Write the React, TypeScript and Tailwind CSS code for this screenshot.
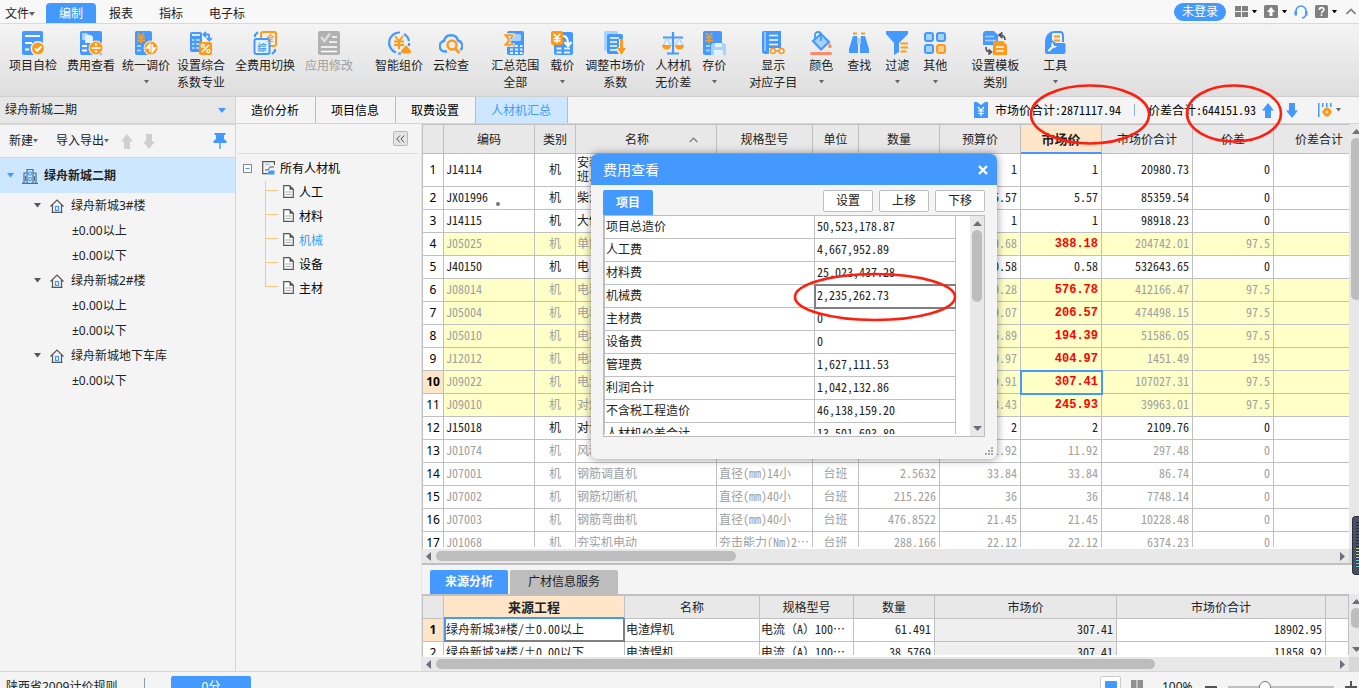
import React, { useState } from "react"

const BLUE = "#4499ff"
const ORANGE = "#ff9a18"
const LIGHT = "#a6d2ff"

const songFont = "font-['Noto_Sans_Mono_CJK_SC','Noto_Sans_CJK_SC',monospace]"

/* ---------- ribbon icons ---------- */

const icons: Record<string, React.ReactNode> = {
    check: (
        <>
            <rect x="1" width="21" height="24" rx="2" fill={BLUE} />
            <path d="M4 5h15M4 12h7M4 18.500h4" stroke="#fff" strokeWidth="2" />
            <circle cx="17" cy="17.500" r="7.500" fill="#f0f0f0" />
            <circle cx="17" cy="17.500" r="6" fill={ORANGE} />
            <path d="M14 17.500l2.300 2.300 4-4.300" stroke="#fff" strokeWidth="2" fill="none" />
        </>
    ),
    fee: (
        <>
            <rect x="1" width="22" height="24" rx="2" fill={BLUE} />
            <path d="M3 2h5l2 2v5H3z" fill={LIGHT} />
            <path d="M6 4h6l2 2v6H6z" fill="#e4f2ff" />
            <path d="M3 15h5M3 19.500h5" stroke="#fff" strokeWidth="2" />
            <circle cx="17" cy="17" r="7.500" fill="#f0f0f0" />
            <circle cx="17" cy="17" r="6.500" fill={ORANGE} />
            <path d="M12.500 17h9" stroke="#fff" strokeWidth="1.800" />
            <circle cx="17" cy="13.500" r="1.200" fill="#fff" />
            <circle cx="17" cy="20.500" r="1.200" fill="#fff" />
        </>
    ),
    adjust: (
        <>
            <rect x="1" width="17" height="24" rx="2" fill={BLUE} />
            <path d="M4 2l3 4 3-4M3 6.500h8M3 9.500h8M7 6v6" stroke={ORANGE} strokeWidth="1.800" fill="none" />
            <path d="M3 15h4M3 19.500h4" stroke={LIGHT} strokeWidth="2" />
            <circle cx="17" cy="17" r="7.500" fill="#f0f0f0" />
            <circle cx="17" cy="17" r="6.500" fill={ORANGE} />
            <path d="M15.800 21v-8l-3.300 4h3.300M18.200 13v8l3.300-4h-3.300" stroke="#fff" strokeWidth="1.500" fill="#fff" />
        </>
    ),
    percent: (
        <>
            <rect x="1" y="1" width="12" height="20" rx="2" fill={BLUE} />
            <path d="M3 4h8" stroke="#fff" strokeWidth="1.600" />
            <path d="M3 9h2.500M7 9h4M3 13h2.500M7 13h4M3 17h2.500M7 17h3" stroke={LIGHT} strokeWidth="2" />
            <path d="M17 1l-2.500 2.500L17 6M15 3.500h5M20 3v6M17.800 7l2.400 2.500L22.800 7" stroke={BLUE} strokeWidth="1.800" fill="none" />
            <rect x="10" y="11" width="13" height="13" rx="2" fill={ORANGE} />
            <path d="M13 21l7-7" stroke="#fff" strokeWidth="1.600" />
            <circle cx="13.800" cy="15" r="1.500" fill="none" stroke="#fff" strokeWidth="1.300" />
            <circle cx="19.300" cy="20.200" r="1.500" fill="none" stroke="#fff" strokeWidth="1.300" />
        </>
    ),
    swap: (
        <>
            <path d="M2 6V4l3-3M22 18v2l-3 3" stroke={BLUE} strokeWidth="2" fill="none" />
            <rect x="8" y="1" width="15" height="14" rx="2" fill="#f0f0f0" stroke={ORANGE} strokeWidth="2" />
            <rect x="1.500" y="8" width="15" height="15" rx="2" fill="#e4f2ff" stroke={BLUE} strokeWidth="2" />
            <text x="17.500" y="9.500" fontSize="8" fontWeight="700" textAnchor="middle" fill={ORANGE}>全</text>
            <text x="9" y="19.500" fontSize="9" fontWeight="700" textAnchor="middle" fill={BLUE}>综</text>
        </>
    ),
    apply: (
        <>
            <rect x="1" width="22" height="24" rx="2" fill="#b1b1b1" />
            <path d="M4 6l3.500 4L13 2.500" stroke="#dcdcdc" strokeWidth="2.500" fill="none" />
            <path d="M15 6h5M12 11h8M4 16h16M4 20.500h16" stroke="#fff" strokeWidth="1.600" />
        </>
    ),
    smart: (
        <>
            <path d="M9 21.500A10.300 10.300 0 0 1 13 1.500M17 3a10.300 10.300 0 0 1 5 7M22 12v3M11 22.500h3" stroke={BLUE} strokeWidth="2.200" fill="none" />
            <path d="M8 5l4 5 4-5M7 10.500h10M7 14h10M12 10v8" stroke={ORANGE} strokeWidth="2" fill="none" />
            <path d="M19 14c2 3 5 5 5 6.500 0 1.500-1 2-2 2h-6c-1 0-2-.5-2-2 0-1.500 3-3.500 5-6.500z" fill={ORANGE} />
        </>
    ),
    cloud: (
        <>
            <path d="M8 20.500H6A5.300 5.300 0 0 1 5 10a7.200 7.200 0 0 1 14-.5 5.500 5.500 0 0 1 2.500 9.500" stroke={BLUE} strokeWidth="2.400" fill="none" />
            <circle cx="13" cy="14" r="4.500" stroke={ORANGE} strokeWidth="2.400" fill="none" />
            <path d="M16 17.500l4.500 4.500" stroke={ORANGE} strokeWidth="2.600" />
        </>
    ),
    sum: (
        <>
            <rect x="4" width="17" height="24" rx="2" fill={BLUE} />
            <rect x="9" y="3" width="9" height="7" rx="1" fill={LIGHT} />
            <path d="M7 15h3M12 15h3M17 15h2.500M7 18.500h3M12 18.500h3M17 18.500h2.500M7 22h3M12 22h3M17 22h2.500" stroke="#e4f2ff" strokeWidth="1.800" />
            <path d="M9.500 6V4.200H2.500L6.500 9l-4 4.800h7V12" stroke="#f0f0f0" strokeWidth="4" fill="none" />
            <path d="M9.500 6V4.200H2.500L6.500 9l-4 4.800h7V12" stroke={ORANGE} strokeWidth="2" fill="none" />
        </>
    ),
    load: (
        <>
            <rect x="4" y="1" width="19" height="23" rx="2" fill={BLUE} />
            <path d="M13 5c4 0 5 3 5 8M14.500 11l3.500 4 3.500-4" stroke="#fff" strokeWidth="2.200" fill="none" />
            <path d="M6.500 17.500h5M14 17.500h6M6.500 21.500h5M14 21.500h6" stroke="#e4f2ff" strokeWidth="1.800" />
            <rect x="1" width="12" height="14" rx="2" fill={ORANGE} />
            <path d="M4 3l3 3.500L10 3M3.500 7.500h7M3.500 10h7M7 7v5" stroke="#fff" strokeWidth="1.500" fill="none" />
        </>
    ),
    market: (
        <>
            <rect x="1" width="14" height="20" rx="2" fill={LIGHT} />
            <rect x="4" y="3" width="16" height="20" rx="2" fill={BLUE} />
            <path d="M7 7h9M7 11h7M7 15h7M7 19h6" stroke="#fff" strokeWidth="1.600" />
            <path d="M18.500 8v11M14.500 17l4 5 4-5" stroke="#f0f0f0" strokeWidth="5" fill="none" />
            <path d="M17 8h3v9h3l-4.500 7L14 17h3z" fill={ORANGE} />
        </>
    ),
    balance: (
        <>
            <path d="M12 1v21M6 22.500h12M2 6.500h20" stroke={BLUE} strokeWidth="2.200" />
            <path d="M6 7l-4 8M6 7l4 8M18 7l-4 8M18 7l4 8" stroke={LIGHT} strokeWidth="1.300" />
            <path d="M1 14h9c0 6-9 6-9 0zM14 14h9c0 6-9 6-9 0z" fill={ORANGE} />
        </>
    ),
    save: (
        <>
            <rect x="1" width="19" height="24" rx="2" fill={BLUE} />
            <path d="M4 2l3 4 3-4M3 6.500h8M3 9.500h8M7 6v6" stroke={ORANGE} strokeWidth="1.600" fill="none" />
            <path d="M4 15h4M4 19.500h4" stroke={LIGHT} strokeWidth="2" />
            <path d="M11 12h11l2 2v10H9V14z" fill={LIGHT} />
            <path d="M13 12h7v4h-7zM12 19h9v5h-9z" fill="#e4f2ff" />
        </>
    ),
    show: (
        <>
            <path d="M3 0h17v17H8v6H4a3 3 0 0 1-3-3V2a2 2 0 0 1 2-2z" fill={BLUE} />
            <path d="M4 1v19" stroke={LIGHT} strokeWidth="1.500" />
            <path d="M8 4.500h9M8 9h9M8 13.500h9" stroke="#fff" strokeWidth="1.500" />
            <circle cx="12" cy="20" r="2.500" stroke={ORANGE} strokeWidth="1.600" fill="#f0f0f0" />
            <circle cx="20.500" cy="20" r="2.500" stroke={ORANGE} strokeWidth="1.600" fill="#f0f0f0" />
            <path d="M14.500 20h3.500" stroke={ORANGE} strokeWidth="1.600" />
        </>
    ),
    color: (
        <>
            <path d="M4 10L12 3l8 8-8 7.500z" fill={LIGHT} stroke={BLUE} strokeWidth="2.200" />
            <path d="M6 9V4a3 3 0 0 1 6 0v6" stroke={BLUE} strokeWidth="1.800" fill="none" />
            <path d="M21 12c2 3 2.500 5 0 5s-2-2 0-5z" fill="#ff8a65" />
            <rect x="1" y="21" width="22" height="3" rx="1.500" fill="#ff8a65" />
        </>
    ),
    find: (
        <>
            <path d="M6 2.500h4M14 2.500h4" stroke={ORANGE} strokeWidth="2" />
            <path d="M6 5h4l1 5v12H2V18z" fill={BLUE} />
            <path d="M14 5h4l4 13v4h-9V10z" fill={BLUE} />
            <rect x="10" y="7" width="4" height="6" fill={LIGHT} />
        </>
    ),
    filter: (
        <>
            <path d="M1 0h22v3l-9 9v9l-5 3V12L1 3z" fill={BLUE} />
            <path d="M15.500 12.500h7.500M15.500 16.500h7.500M15.500 20.500h6" stroke={ORANGE} strokeWidth="2" />
        </>
    ),
    other: (
        <>
            <rect x="2" y="2" width="8" height="8" rx="2" fill={LIGHT} stroke={BLUE} strokeWidth="2" />
            <rect x="14" y="2" width="8" height="8" rx="2" fill={LIGHT} stroke={BLUE} strokeWidth="2" />
            <rect x="2" y="14" width="8" height="8" rx="2" fill={LIGHT} stroke={BLUE} strokeWidth="2" />
            <rect x="14" y="14" width="8" height="8" rx="2" fill="#ffd08a" stroke={ORANGE} strokeWidth="2" />
        </>
    ),
    template: (
        <>
            <path d="M2 0h9l4 4v10H0V2z" fill={BLUE} />
            <path d="M2 5.500h9M2 9.500h11" stroke={LIGHT} strokeWidth="1.500" />
            <path d="M17 4c4 0 5 2 5 5M19.500 1.500L16 4l3.500 3M3 16c0 4 1 5 5 5M5.500 18.500L8.500 21l-3 2.500" stroke="#555" strokeWidth="1.700" fill="none" />
            <path d="M10 10h10l4 4v10H10z" fill={ORANGE} />
            <path d="M13 16h8M13 20h8" stroke="#fff" strokeWidth="1.500" />
        </>
    ),
    tools: (
        <>
            <path d="M3 10c0-5 4-9 8-9h6c2 0 3 2 3 4v6" stroke={BLUE} strokeWidth="2" fill="#f0f0f0" />
            <path d="M3 11c0-5 3-8 6-9v9z" fill={BLUE} />
            <path d="M11 5.500h6M11 9.500h6" stroke={ORANGE} strokeWidth="2" />
            <path d="M2 11a2 2 0 0 1 2-2h5l4 3h8a1.500 1.500 0 0 1 1.500 1.500V21a2 2 0 0 1-2 2H4a2 2 0 0 1-2-2z" fill={BLUE} />
            <path d="M5.500 20l4-4" stroke="#fff" strokeWidth="2.200" />
            <path d="M10 11v2.500l1.500 1.500H14a3 3 0 1 1-4-4z" fill="#fff" />
        </>
    ),
}

type RibbonItem = {
    icon: string
    lines: string[]
    caret?: boolean
    disabled?: boolean
    pad?: string
}

const ribbonGroups: RibbonItem[][] = [
    [
        { icon: "check", lines: ["项目自检"] },
        { icon: "fee", lines: ["费用查看"] },
        { icon: "adjust", lines: ["统一调价"], caret: true, pad: "px-0.5" },
        { icon: "percent", lines: ["设置综合", "系数专业"] },
        { icon: "swap", lines: ["全费用切换"] },
        { icon: "apply", lines: ["应用修改"], disabled: true },
    ],
    [
        { icon: "smart", lines: ["智能组价"] },
        { icon: "cloud", lines: ["云检查"] },
    ],
    [
        { icon: "sum", lines: ["汇总范围", "全部"] },
        { icon: "load", lines: ["载价"], caret: true, pad: "px-1.5" },
        { icon: "market", lines: ["调整市场价", "系数"] },
        { icon: "balance", lines: ["人材机", "无价差"] },
        { icon: "save", lines: ["存价"], caret: true, pad: "px-1.5" },
    ],
    [
        { icon: "show", lines: ["显示", "对应子目"] },
        { icon: "color", lines: ["颜色"], caret: true, pad: "px-[7px]" },
        { icon: "find", lines: ["查找"], pad: "px-[7px]" },
        { icon: "filter", lines: ["过滤"], caret: true, pad: "px-[7px]" },
        { icon: "other", lines: ["其他"], caret: true, pad: "px-[7px]" },
    ],
    [{ icon: "template", lines: ["设置模板", "类别"] }],
    [{ icon: "tools", lines: ["工具"], caret: true, pad: "px-[7px]" }],
]

/* ---------- data ---------- */

// no, code, name, spec, unit, qty, budget, market, total, diff, tone
type Tone = "normal" | "changed" | "muted"
type Row = [number, string, string, string, string, string, string, string, string, string, Tone]

const rows: Row[] = [
    [1, "J14114", "安装\n班人", "", "", "", "1", "1", "20980.73", "0", "normal"],
    [2, "JX01996", "柴油", "", "", "", "5.57", "5.57", "85359.54", "0", "normal"],
    [3, "J14115", "大修", "", "", "", "1", "1", "98918.23", "0", "normal"],
    [4, "J05025", "单筒", "", "", "", "290.68", "388.18", "204742.01", "97.5", "changed"],
    [5, "J40150", "电", "", "", "", "0.58", "0.58", "532643.65", "0", "normal"],
    [6, "J08014", "电动", "", "", "", "479.28", "576.78", "412166.47", "97.5", "changed"],
    [7, "J05004", "电动", "", "", "", "109.07", "206.57", "474498.15", "97.5", "changed"],
    [8, "J05010", "电动", "", "", "", "96.89", "194.39", "51586.05", "97.5", "changed"],
    [9, "J12012", "电动", "", "", "", "209.97", "404.97", "1451.49", "195", "changed"],
    [10, "J09022", "电渣", "", "", "", "209.91", "307.41", "107027.31", "97.5", "changed"],
    [11, "J09010", "对焊", "", "", "", "148.43", "245.93", "39963.01", "97.5", "changed"],
    [12, "J15018", "对讲", "", "", "", "2", "2", "2109.76", "0", "normal"],
    [13, "J01074", "风动", "", "", "", "11.92", "11.92", "297.48", "0", "muted"],
    [14, "J07001", "钢筋调直机", "直径(mm)14小", "台班", "2.5632", "33.84", "33.84", "86.74", "0", "muted"],
    [15, "J07002", "钢筋切断机", "直径(mm)40小", "台班", "215.226", "36", "36", "7748.14", "0", "muted"],
    [16, "J07003", "钢筋弯曲机", "直径(mm)40小", "台班", "476.8522", "21.45", "21.45", "10228.48", "0", "muted"],
    [17, "J01068", "夯实机电动", "夯击能力(Nm)2⋯", "台班", "288.166", "22.12", "22.12", "6374.23", "0", "muted"],
]

const feeRows = [
    ["项目总造价", "50,523,178.87"],
    ["人工费", "4,667,952.89"],
    ["材料费", "25,023,437.28"],
    ["机械费", "2,235,262.73"],
    ["主材费", "0"],
    ["设备费", "0"],
    ["管理费", "1,627,111.53"],
    ["利润合计", "1,042,132.86"],
    ["不含税工程造价", "46,138,159.20"],
    ["人材机价差合计", "13,501,693.89"],
]

const buildings = [
    { name: "绿舟新城3#楼", floors: ["±0.00以上", "±0.00以下"] },
    { name: "绿舟新城2#楼", floors: ["±0.00以上", "±0.00以下"] },
    { name: "绿舟新城地下车库", floors: ["±0.00以下"] },
]

/* ---------- small parts ---------- */

const Caret = ({ className = "text-[#666]", size = 6 }: { className?: string; size?: number }) => (
    <svg width={size} height={size / 2 + 1} viewBox="0 0 8 4" preserveAspectRatio="none" className={`shrink-0 ${className}`}>
        <path d="M0 0h8L4 4z" fill="currentColor" />
    </svg>
)

const Triangle = ({ dir }: { dir: "up" | "down" | "left" | "right" }) => {
    const paths = {
        up: "M0 7h9L4.500 2z",
        down: "M0 2h9L4.500 7z",
        left: "M7 0v9L2 4.500z",
        right: "M2 0v9l5-4.500z",
    }
    return (
        <svg width="9" height="9" viewBox="0 0 9 9" className="shrink-0">
            <path d={paths[dir]} fill="#6e6e78" />
        </svg>
    )
}

const BlockArrow = ({ down, color, h }: { down?: boolean; color: string; h: number }) => (
    <svg width="12" height={h} viewBox="0 0 12 16" className="shrink-0" preserveAspectRatio="none">
        <path d={down ? "M3 0h6v8h3l-6 8-6-8h3z" : "M3 16h6V8h3L6 0 0 8h3z"} fill={color} />
    </svg>
)

const HouseIcon = () => (
    <svg width="14" height="14" viewBox="0 0 14 14" fill="none" className="shrink-0">
        <path d="M0.500 7.500L7 1l6.500 6.500M2.500 6v7.300h9V6M1.500 13.300h11" stroke="#555" strokeWidth="1.200" />
        <rect x="5.500" y="7.500" width="3" height="4" stroke={BLUE} strokeWidth="1.200" />
    </svg>
)

const FileIcon = () => (
    <svg width="11" height="13" viewBox="0 0 11 13" fill="none" className="mb-1 shrink-0">
        <path d="M0.700 0.700h6l3.600 3.600v8H0.700z" fill="#fff" stroke="#555" strokeWidth="1.200" />
        <path d="M6.500 0.700v4h4z" fill="#555" />
        <path d="M2.500 7h6M2.500 9.500h6" stroke="#aaa" />
    </svg>
)

/* ---------- sections ---------- */

const MenuBar = () => (
    <header className="flex h-6 shrink-0 items-end border-b border-[#d9d9d9] bg-[#f8f8f8]">
        <button className="flex h-5 w-[46px] items-center pt-px pl-[5px]">文件<Caret /></button>
        <nav className="flex">
            <button className="h-5 rounded-t-sm bg-[#4499ff] px-[13px] pt-px text-white">编制</button>
            <button className="h-5 px-[13px] pt-px">报表</button>
            <button className="h-5 px-[13px] pt-px">指标</button>
            <button className="h-5 px-[13px] pt-px">电子标</button>
        </nav>
        <div className="ml-auto flex h-[23px] items-center gap-[7px] pr-[3px]">
            <button className="h-[18px] rounded-full bg-[#4499ff] px-2 leading-[18px] text-white">未登录</button>
            <button aria-label="布局" className="ml-0.5 flex items-center gap-1">
                <svg width="13" height="12" viewBox="0 0 13 12" fill="#808080">
                    <path d="M0 0h6v5H0zM7 0h6v5H7zM0 6h6v5H0zM7 6h6v5H7z" />
                </svg>
                <Caret className="text-black" size={5} />
            </button>
            <button aria-label="上传" className="flex items-center gap-1">
                <svg width="14" height="13" viewBox="0 0 14 13">
                    <rect width="14" height="13" rx="1.500" fill="#808080" />
                    <path d="M5.500 11V7H3l4-5 4 5H8.500v4z" fill="#fff" />
                </svg>
                <Caret className="text-black" size={5} />
            </button>
            <button aria-label="客服">
                <svg width="14" height="14" viewBox="0 0 14 14" fill="none">
                    <path d="M2 8V6a5 5 0 0 1 10 0v2c0 3-1 4.500-4 5" stroke={BLUE} strokeWidth="1.600" />
                    <path d="M0.500 6h2.500v4.500H0.500zM11 6h2.500v4.500H11z" fill={BLUE} />
                </svg>
            </button>
            <button aria-label="帮助" className="flex items-center gap-1">
                <svg width="13" height="13" viewBox="0 0 13 13">
                    <rect width="13" height="13" rx="1.500" fill="#808080" />
                    <path d="M4.300 5c0-3.300 4.600-3 4.600-.4C8.900 6.300 6.500 6.300 6.500 8.300M6.500 9.300v1.700" stroke="#fff" strokeWidth="1.600" fill="none" />
                </svg>
                <Caret className="text-black" size={5} />
            </button>
            <button aria-label="收起" className="ml-0.5">
                <svg width="10" height="7" viewBox="0 0 10 7" fill="none">
                    <path d="M0.500 6L5 1.500 9.500 6" stroke="#808080" strokeWidth="1.700" />
                </svg>
            </button>
        </div>
    </header>
)

const Ribbon = () => (
    <div className="flex h-[73px] shrink-0 gap-3 border-b border-[#cfcfcf] bg-linear-to-b from-[#f4f4f4] to-[#dedede] pl-1 pt-[7px]">
        {ribbonGroups.map((group, i) => (
            <div key={i} className="flex">
                {group.map((item) => (
                    <button
                        key={item.icon}
                        disabled={item.disabled}
                        className={`flex flex-col items-center leading-[17px] whitespace-nowrap ${item.pad ?? "px-[5px]"} ${item.disabled ? "text-[#a0a0a0]" : ""}`}
                    >
                        <svg width="24" height="24" viewBox="0 0 24 24" className="mb-0.5">
                            {icons[item.icon]}
                        </svg>
                        {item.lines.map((line) => (
                            <span key={line}>{line}</span>
                        ))}
                        {item.caret && <span className="pt-1.5"><Caret size={5} /></span>}
                    </button>
                ))}
            </div>
        ))}
    </div>
)

const ProjectPanel = () => (
    <aside className="flex w-[236px] shrink-0 flex-col border-r border-[#d5d5d5]">
        <div className="flex h-7 items-center border-b-2 border-[#d5d5d5] bg-[#e7e7e7] pr-[9px] pl-[5px]">
            <select aria-label="项目" className="flex-1 appearance-none outline-none">
                <option>绿舟新城二期</option>
            </select>
            <Caret className="text-[#4499ff]" size={8} />
        </div>
        <div className="flex h-[33px] items-center border-b border-[#d5d5d5] pl-[9px]">
            <button className="flex items-center">新建<Caret size={5} /></button>
            <button className="ml-[18px] flex items-center">导入导出<Caret size={5} /></button>
            <button aria-label="上移" className="ml-3"><BlockArrow color="#cfcfcf" h={15} /></button>
            <button aria-label="下移" className="ml-[10px]"><BlockArrow down color="#cfcfcf" h={15} /></button>
            <button aria-label="固定" className="mr-2 ml-auto">
                <svg width="14" height="16" viewBox="0 0 14 16">
                    <path d="M1.500 0h11v2H11v4l2.500 2v2H.5V8L3 6V2H1.500z" fill={BLUE} />
                    <path d="M6.300 10h1.400v6H6.300z" fill={BLUE} />
                </svg>
            </button>
        </div>
        <button className="flex h-[35px] items-center bg-[#cce7ff] pl-[7px] font-bold">
            <Caret className="text-[#4499ff]" size={7} />
            <svg width="16" height="16" viewBox="0 0 16 16" fill="none" className="mr-1.5 ml-2">
                <path d="M5 15V1.500h6V15M2 15V5h3M14 15V5h-3M0 15.300h16" stroke="#4a6f96" strokeWidth="1.200" />
                <path d="M3.500 8v5M12.500 8v5" stroke="#4a6f96" />
                <path d="M6.700 4h2.600v3H6.700zM6.700 9.500h2.600v3H6.700z" stroke={BLUE} />
            </svg>
            绿舟新城二期
        </button>
        <ul>
            {buildings.map((b) => (
                <li key={b.name}>
                    <button className="flex h-[25px] w-full items-center pl-[34px]">
                        <Caret className="text-[#555]" size={7} />
                        <span className="mr-[7px] ml-[9px]"><HouseIcon /></span>
                        {b.name}
                    </button>
                    {b.floors.map((f) => (
                        <button key={f} className="flex h-[25px] w-full items-center pl-[72px]">{f}</button>
                    ))}
                </li>
            ))}
        </ul>
    </aside>
)

const CategoryPanel = () => (
    <div className="flex w-[186px] shrink-0 flex-col border-r border-[#e4e4e4] pr-[3px] pl-0.5">
        <div className="flex h-[30px] items-center justify-end border-b border-[#dcdcdc] pr-2.5">
            <button aria-label="折叠" className="flex h-[15px] w-[15px] items-center justify-center rounded-xs border border-[#b8b8b8] bg-[#e4e4e4]">
                <svg width="9" height="8" viewBox="0 0 9 8" fill="none">
                    <path d="M4 0.500L0.800 4 4 7.500M8.200 0.500L5 4l3.200 3.500" stroke="#555" />
                </svg>
            </button>
        </div>
        <button className="mt-[3px] flex h-6 items-center pl-[5px] text-black">
            <svg width="9" height="9" viewBox="0 0 9 9" fill="none" className="mb-0.5">
                <rect x="0.500" y="0.500" width="8" height="8" fill="#fff" stroke="#888" />
                <path d="M2.500 4.500h4" stroke={BLUE} />
            </svg>
            <svg width="13" height="14" viewBox="0 0 13 14" fill="none" className="mr-[5px] mb-0.5 ml-2.5">
                <path d="M12.500 4V0.700H0.700v12H5" stroke="#555" strokeWidth="1.200" />
                <path d="M3 3.500h5" stroke={LIGHT} strokeWidth="1.500" />
                <path d="M3 9h3l2-3h4" stroke="#555" />
                <path d="M4.500 13.500L7 9.500h5.500v4z" fill={BLUE} />
            </svg>
            所有人材机
        </button>
        <ul className="pl-[27px]">
            {["人工", "材料", "机械", "设备", "主材"].map((name, i) => (
                <li key={name} className="flex h-6 items-center">
                    <span className="flex h-full w-[13px] flex-col">
                        <span className="h-2.5 border-b border-l border-[#ffc77d]"></span>
                        <span className={i < 4 ? "flex-1 border-l border-[#ffc77d]" : "flex-1"}></span>
                    </span>
                    <button className={`flex items-center gap-[5px] pl-[5px] ${name === "机械" ? "text-[#4499ff]" : "text-black"}`}>
                        <FileIcon />
                        {name}
                    </button>
                </li>
            ))}
        </ul>
    </div>
)

const th = "border-r border-b border-[#c0c0c0] bg-[#e8e8e8] px-0 pt-0 pb-0.5 font-normal"
const thActive = "border-r border-b-2 border-r-[#c0c0c0] border-b-[#4499ff] bg-[#ffe6c9] px-0 pt-0 pb-px text-[13px] font-bold"
const td = "border-r border-b border-[#c0c0c0] pt-0 pb-[3px]"
const rowNo = "border-r border-b border-[#c0c0c0] px-0 pt-0 pb-px text-center font-['Noto_Sans','Noto_Sans_CJK_SC',sans-serif] text-black"
const changedPrice = "border-r border-b border-[#c0c0c0] py-0 font-['Liberation_Mono',monospace] font-bold text-[#ff0000]"

const MaterialTable = () => (
    <table className={`w-full min-w-[942px] table-fixed border-separate border-spacing-0 leading-[15px] ${songFont}`}>
        <colgroup>
            <col className="w-[21px]" />
            <col className="w-[91px]" />
            <col className="w-[41px]" />
            <col className="w-[141px]" />
            <col className="w-[96px]" />
            <col className="w-[46px]" />
            <col className="w-[81px]" />
            <col className="w-[81px]" />
            <col className="w-[81px]" />
            <col className="w-[91px]" />
            <col className="w-[81px]" />
            <col />
        </colgroup>
        <thead>
            <tr className="h-[29px]">
                <th className={th}></th>
                <th className={th}>编码</th>
                <th className={th}>类别</th>
                <th className={th}>
                    <span className="flex items-center justify-center">
                        <span className="flex-1"></span>
                        <span>名称</span>
                        <span className="flex flex-1 justify-end pt-1 pr-[18px]">
                            <svg width="9" height="6" viewBox="0 0 9 6" fill="none">
                                <path d="M0.700 5L4.500 1l3.800 4" stroke="#777" strokeWidth="1.200" />
                            </svg>
                        </span>
                    </span>
                </th>
                <th className={th}>规格型号</th>
                <th className={th}>单位</th>
                <th className={th}>数量</th>
                <th className={th}>预算价</th>
                <th className={thActive}>市场价</th>
                <th className={th}>市场价合计</th>
                <th className={th}>价差</th>
                <th className={th}>价差合计</th>
            </tr>
        </thead>
        <tbody>
            {rows.map(([no, code, name, spec, unit, qty, budget, market, total, diff, tone]) => (
                <tr
                    key={no}
                    className={`${no === 1 ? "h-[33px]" : "h-[23px]"} ${tone === "changed" ? "bg-[#ffffc8]" : "bg-white"} ${tone === "normal" ? "text-[#222]" : "text-[#a0a0a0]"}`}
                >
                    <td className={`${rowNo} ${no === 10 ? "bg-[#ffe6c9] font-bold" : "bg-white"}`}>{no}</td>
                    <td className={`${td} pl-0.5`}>
                        {code}
                        {no === 2 && <span className="ml-2 inline-block size-1 translate-y-1 rounded-full bg-[#777]"></span>}
                    </td>
                    <td className={`${td} text-center`}>机</td>
                    <td className={`${td} pl-px whitespace-pre leading-[14px]`}>{name}</td>
                    <td className={`${td} truncate pl-0.5`}>{spec}</td>
                    <td className={`${td} text-center`}>{unit}</td>
                    <td className={`${td} pr-[3px] text-right`}>{qty}</td>
                    <td className={`${td} pr-[3px] text-right`}>{budget}</td>
                    <td
                        className={`pr-[3px] text-right ${tone === "changed" ? changedPrice : td} ${no === 10 ? "outline-2 -outline-offset-1 outline-[#4499ff]" : ""}`}
                    >
                        {market}
                    </td>
                    <td className={`${td} pr-[3px] text-right`}>{total}</td>
                    <td className={`${td} pr-[3px] text-right`}>{diff}</td>
                    <td className={td}></td>
                </tr>
            ))}
        </tbody>
    </table>
)

const SourceTable = () => (
    <table className={`w-full table-fixed border-separate border-spacing-0 leading-[15px] text-[#222] ${songFont}`}>
        <colgroup>
            <col className="w-[21px]" />
            <col className="w-[181px]" />
            <col className="w-[135px]" />
            <col className="w-[94px]" />
            <col className="w-[81px]" />
            <col className="w-[182px]" />
            <col className="w-[209px]" />
            <col />
        </colgroup>
        <thead>
            <tr className="h-[23px]">
                <th className={th}></th>
                <th className={thActive}>来源工程</th>
                <th className={th}>名称</th>
                <th className={th}>规格型号</th>
                <th className={th}>数量</th>
                <th className={th}>市场价</th>
                <th className={th}>市场价合计</th>
                <th className={th}></th>
            </tr>
        </thead>
        <tbody>
            {[
                ["绿舟新城3#楼/±0.00以上", "61.491", "18902.95"],
                ["绿舟新城3#楼/±0.00以下", "38.5769", "11858.92"],
            ].map(([src, qty, total], i) => (
                <tr key={src} className="h-[23px] bg-white">
                    <td className={`${rowNo} ${i === 0 ? "bg-[#ffe6c9] font-bold" : ""}`}>{i + 1}</td>
                    <td
                        className={
                            i === 0
                                ? "border-r-2 border-b-2 border-l-2 border-[#808080] border-l-[#4499ff] pt-0 pb-0.5 pl-0"
                                : `${td} pl-0.5`
                        }
                    >
                        {src}
                    </td>
                    <td className={`${td} pl-px`}>电渣焊机</td>
                    <td className={`${td} pl-px whitespace-nowrap`}>电流（A）100⋯</td>
                    <td className={`${td} pr-[3px] text-right`}>{qty}</td>
                    <td className={`${td} bg-[#efefef] pr-[3px] text-right`}>307.41</td>
                    <td className={`${td} pr-[3px] text-right`}>{total}</td>
                    <td className={td}></td>
                </tr>
            ))}
        </tbody>
    </table>
)

const HScroll = ({ thumb }: { thumb: string }) => (
    <div className="flex h-3.5 shrink-0 items-center bg-[#e8e8e8]">
        <div className="flex min-w-0 flex-1 items-center px-0.5">
            <Triangle dir="left" />
            <div className="mx-[3px] flex-1">
                <div className={`h-2.5 rounded-full bg-[#bdbdbd] ${thumb}`}></div>
            </div>
            <Triangle dir="right" />
        </div>
        <div className="h-full w-2.5 bg-[#d8d8d8]"></div>
    </div>
)

const FeeDialog = ({ onClose }: { onClose: () => void }) => (
    <section
        role="dialog"
        aria-label="费用查看"
        className="absolute top-[154px] left-[591px] flex h-[305px] w-[406px] flex-col rounded-md bg-[#f4f4f4] shadow-[0_0_8px_rgba(0,0,0,0.45)]"
    >
        <div className="flex h-[31px] shrink-0 items-center justify-between rounded-t-md bg-[#4499ff] pr-[9px] pl-3 text-white">
            <h2 className="text-sm">费用查看</h2>
            <button aria-label="关闭" onClick={onClose}>
                <svg width="10" height="10" viewBox="0 0 10 10">
                    <path d="M1 1l8 8M9 1L1 9" stroke="#fff" strokeWidth="2.400" />
                </svg>
            </button>
        </div>
        <div className="mt-[5px] flex items-start justify-between px-3">
            <button className="h-[25px] w-[50px] rounded-t-xs bg-[#4499ff] font-bold text-white">项目</button>
            <div className="flex gap-1.5">
                {["设置", "上移", "下移"].map((t) => (
                    <button key={t} className="h-[22px] w-[50px] rounded-xs border border-[#bdbdbd] bg-white">{t}</button>
                ))}
            </div>
        </div>
        <div className="mx-3 flex h-[222px] border border-[#bdbdbd] bg-white">
            <div className="mb-0.5 w-[352px] overflow-hidden border-l border-[#c0c0c0]">
                <table className={`w-full table-fixed border-separate border-spacing-0 leading-[15px] text-[#222] ${songFont}`}>
                    <colgroup>
                        <col />
                        <col className="w-[141px]" />
                    </colgroup>
                    <tbody>
                        {feeRows.map(([name, value]) => (
                            <tr key={name} className="h-[23px]">
                                <td className={`${td} pl-px`}>{name}</td>
                                <td className={`${td} pl-0.5 ${name === "机械费" ? "outline-2 -outline-offset-1 outline-[#808080]" : ""}`}>{value}</td>
                            </tr>
                        ))}
                    </tbody>
                </table>
            </div>
            <div className="ml-auto flex w-3.5 flex-col items-center bg-[#e8e8e8] py-[3px]">
                <Triangle dir="up" />
                <div className="mt-0.5 h-[72px] w-2.5 rounded-full bg-[#bdbdbd]"></div>
                <span className="mt-auto flex"><Triangle dir="down" /></span>
            </div>
        </div>
        <svg width="9" height="9" viewBox="0 0 9 9" className="mt-auto mr-[3px] mb-[3px] self-end" fill="#aaa">
            <path d="M6 0h2v2H6zM6 3h2v2H6zM6 6h2v2H6zM3 3h2v2H3zM3 6h2v2H3zM0 6h2v2H0z" />
        </svg>
    </section>
)

const StatusBar = () => (
    <footer className="h-[17px] shrink-0 overflow-hidden border-t border-[#d5d5d5]">
        <div className="flex h-[30px] items-center">
            <span className="w-[138px] pl-[6px]">陕西省2009计价规则</span>
            <span className="mx-[6px] h-[18px] w-px bg-[#8e9bb0]"></span>
            <button className="ml-5 h-[22px] w-20 rounded-xs bg-[#4499ff] text-white">0分</button>
            <div className="ml-auto flex items-center">
                <button aria-label="单栏" className="flex h-[22px] w-[21px] justify-center rounded-xs border border-[#ccc] bg-white pt-1">
                    <svg width="12" height="12" viewBox="0 0 12 12"><rect width="12" height="12" rx="1" fill={BLUE} /></svg>
                </button>
                <button aria-label="双栏" className="ml-2.5">
                    <svg width="12" height="14" viewBox="0 0 12 14" fill="#909090"><path d="M0 0h5.500v14H0zM6.500 0H12v14H6.500z" /></svg>
                </button>
                <span className="ml-[19px] w-[32px]">100%</span>
                <button aria-label="缩小" className="ml-[11px] h-0.5 w-3 bg-[#555]"></button>
                <input
                    type="range"
                    aria-label="缩放"
                    defaultValue={33}
                    className="mx-[11px] h-0.5 w-[106px] appearance-none bg-[#c0c0c0] [&::-webkit-slider-thumb]:size-3 [&::-webkit-slider-thumb]:appearance-none [&::-webkit-slider-thumb]:rounded-full [&::-webkit-slider-thumb]:border [&::-webkit-slider-thumb]:border-solid [&::-webkit-slider-thumb]:border-[#777] [&::-webkit-slider-thumb]:bg-white"
                />
                <button aria-label="放大" className="mr-0.5">
                    <svg width="12" height="12" viewBox="0 0 12 12"><path d="M6 0v12M0 6h12" stroke="#555" strokeWidth="2" /></svg>
                </button>
            </div>
        </div>
    </footer>
)

const App = () => {
    const [dialogOpen, setDialogOpen] = useState(true)

    return (
        <div className="relative flex h-screen flex-col overflow-hidden bg-[#f4f4f4] font-['Noto_Sans','Noto_Sans_CJK_SC',sans-serif] text-xs text-[#222]">
            <MenuBar />
            <Ribbon />
            <div className="flex min-h-0 flex-1">
                <ProjectPanel />
                <main className="flex min-w-0 flex-1 flex-col">
                    <div className="flex h-[27px] shrink-0 border-b border-[#d5d5d5]">
                        <button className="border-r border-[#bbb] px-4 pt-0.5 pl-[15px] text-black">造价分析</button>
                        <button className="border-r border-[#bbb] px-4 pt-0.5 pl-[15px] text-black">项目信息</button>
                        <button className="border-r border-[#bbb] px-4 pt-0.5 pl-[15px] text-black">取费设置</button>
                        <button className="border-r border-[#bbb] bg-[#cce7ff] px-4 pt-0.5 pl-[15px] text-[#4499ff]">人材机汇总</button>
                        <div className={`ml-auto flex items-center pr-[18px] text-black ${songFont}`}>
                            <svg width="14" height="16" viewBox="0 0 14 16" className="mr-[7px]">
                                <path d="M0 0h3l4 3 4-3h3v16H0z" fill={BLUE} />
                                <path d="M4 5l3 3.500L10 5M4 9h6M4 11.500h6M7 9v5" stroke="#fff" strokeWidth="1.200" fill="none" />
                            </svg>
                            <span>市场价合计:2871117.94</span>
                            <span className="mx-[13px] h-3 w-px bg-[#8fb4dc]"></span>
                            <span>价差合计:644151.93</span>
                            <button aria-label="上一条" className="ml-1.5"><BlockArrow color={BLUE} h={15} /></button>
                            <button aria-label="下一条" className="ml-3"><BlockArrow down color={BLUE} h={15} /></button>
                            <button aria-label="显示设置" className="ml-5 flex items-center gap-1">
                                <svg width="14" height="15" viewBox="0 0 14 15">
                                    <path d="M0 0h1.500v14H0zM4 0h1.500v4H4zM8 0h1.500v4H8zM12 0h1.500v4H12z" fill={BLUE} />
                                    <circle cx="9" cy="9" r="2.700" fill="none" stroke={ORANGE} strokeWidth="3" />
                                    <path d="M9 4.500v2M9 11.500v2M4.500 9h2M11.500 9h2" stroke={ORANGE} strokeWidth="2.500" />
                                </svg>
                                <Caret size={5} />
                            </button>
                        </div>
                    </div>
                    <div className="flex min-h-0 flex-1">
                        <CategoryPanel />
                        <div className="flex min-w-0 flex-1 flex-col">
                            <div className="flex min-h-0 flex-1">
                                <div className="min-w-0 flex-1 overflow-hidden border-t border-l border-[#c0c0c0] bg-white pb-0.5">
                                    <div className="h-full overflow-hidden">
                                        <MaterialTable />
                                    </div>
                                </div>
                                <div className="w-2.5 overflow-hidden bg-[#e8e8e8]">
                                    <div className="flex w-3.5 flex-col items-center pt-[3px]">
                                        <Triangle dir="up" />
                                        <div className="mt-0.5 h-[162px] w-2.5 rounded-full bg-[#bdbdbd]"></div>
                                    </div>
                                </div>
                            </div>
                            <HScroll thumb="w-1/3" />
                            <div className="flex h-[31px] shrink-0 items-end gap-0.5 border-t-2 border-[#c0c0c0] pl-2">
                                <button className="h-6 w-[78px] rounded-t-xs bg-[#4499ff] font-bold text-white">来源分析</button>
                                <button className="h-6 w-[108px] rounded-t-xs bg-[#bdbdbd]">广材信息服务</button>
                            </div>
                            <div className="flex h-[63px] shrink-0">
                                <div className="min-w-0 flex-1 border-t-2 border-l border-[#c0c0c0] bg-white pb-0.5">
                                    <div className="h-full overflow-hidden">
                                        <SourceTable />
                                    </div>
                                </div>
                                <div className="w-2.5 overflow-hidden bg-[#e8e8e8]">
                                    <div className="flex h-full w-3.5 flex-col items-center py-[3px]">
                                        <Triangle dir="up" />
                                        <div className="mt-0.5 h-5 w-2.5 rounded-full bg-[#bdbdbd]"></div>
                                        <span className="mt-auto flex"><Triangle dir="down" /></span>
                                    </div>
                                </div>
                            </div>
                            <HScroll thumb="w-4/5" />
                        </div>
                    </div>
                </main>
            </div>
            <StatusBar />

            {dialogOpen && <FeeDialog onClose={() => setDialogOpen(false)} />}

            {/* red marks over the totals and the machine fee */}
            <svg viewBox="790 82 500 240" className="pointer-events-none absolute top-[82px] left-[790px] h-[240px] w-[500px]" fill="none" stroke="#ff1e0f" strokeWidth="2.600">
                <ellipse cx="1090" cy="114.500" rx="59" ry="29" />
                <ellipse cx="1234" cy="113.500" rx="47" ry="28" />
                <ellipse cx="875" cy="297" rx="80" ry="23" />
            </svg>

            {/* floating meter at the window edge */}
            <div className="absolute top-[516px] right-0 flex h-[59px] w-[7px] flex-col justify-end rounded-l-sm border-y border-l border-[#2c3040] bg-[#4a5064] pb-1.5 pl-[3px]">
                <div className="h-[26px] bg-[repeating-linear-gradient(#262b3a_0_1px,#4a5064_1px_3px)]"></div>
                <div className="h-3 bg-[repeating-linear-gradient(#b4dc78_0_1px,#3d4356_1px_3px)]"></div>
                <div className="h-2 bg-[repeating-linear-gradient(#5fd8d0_0_1px,#3d4356_1px_3px)]"></div>
            </div>
        </div>
    )
}

export default App
